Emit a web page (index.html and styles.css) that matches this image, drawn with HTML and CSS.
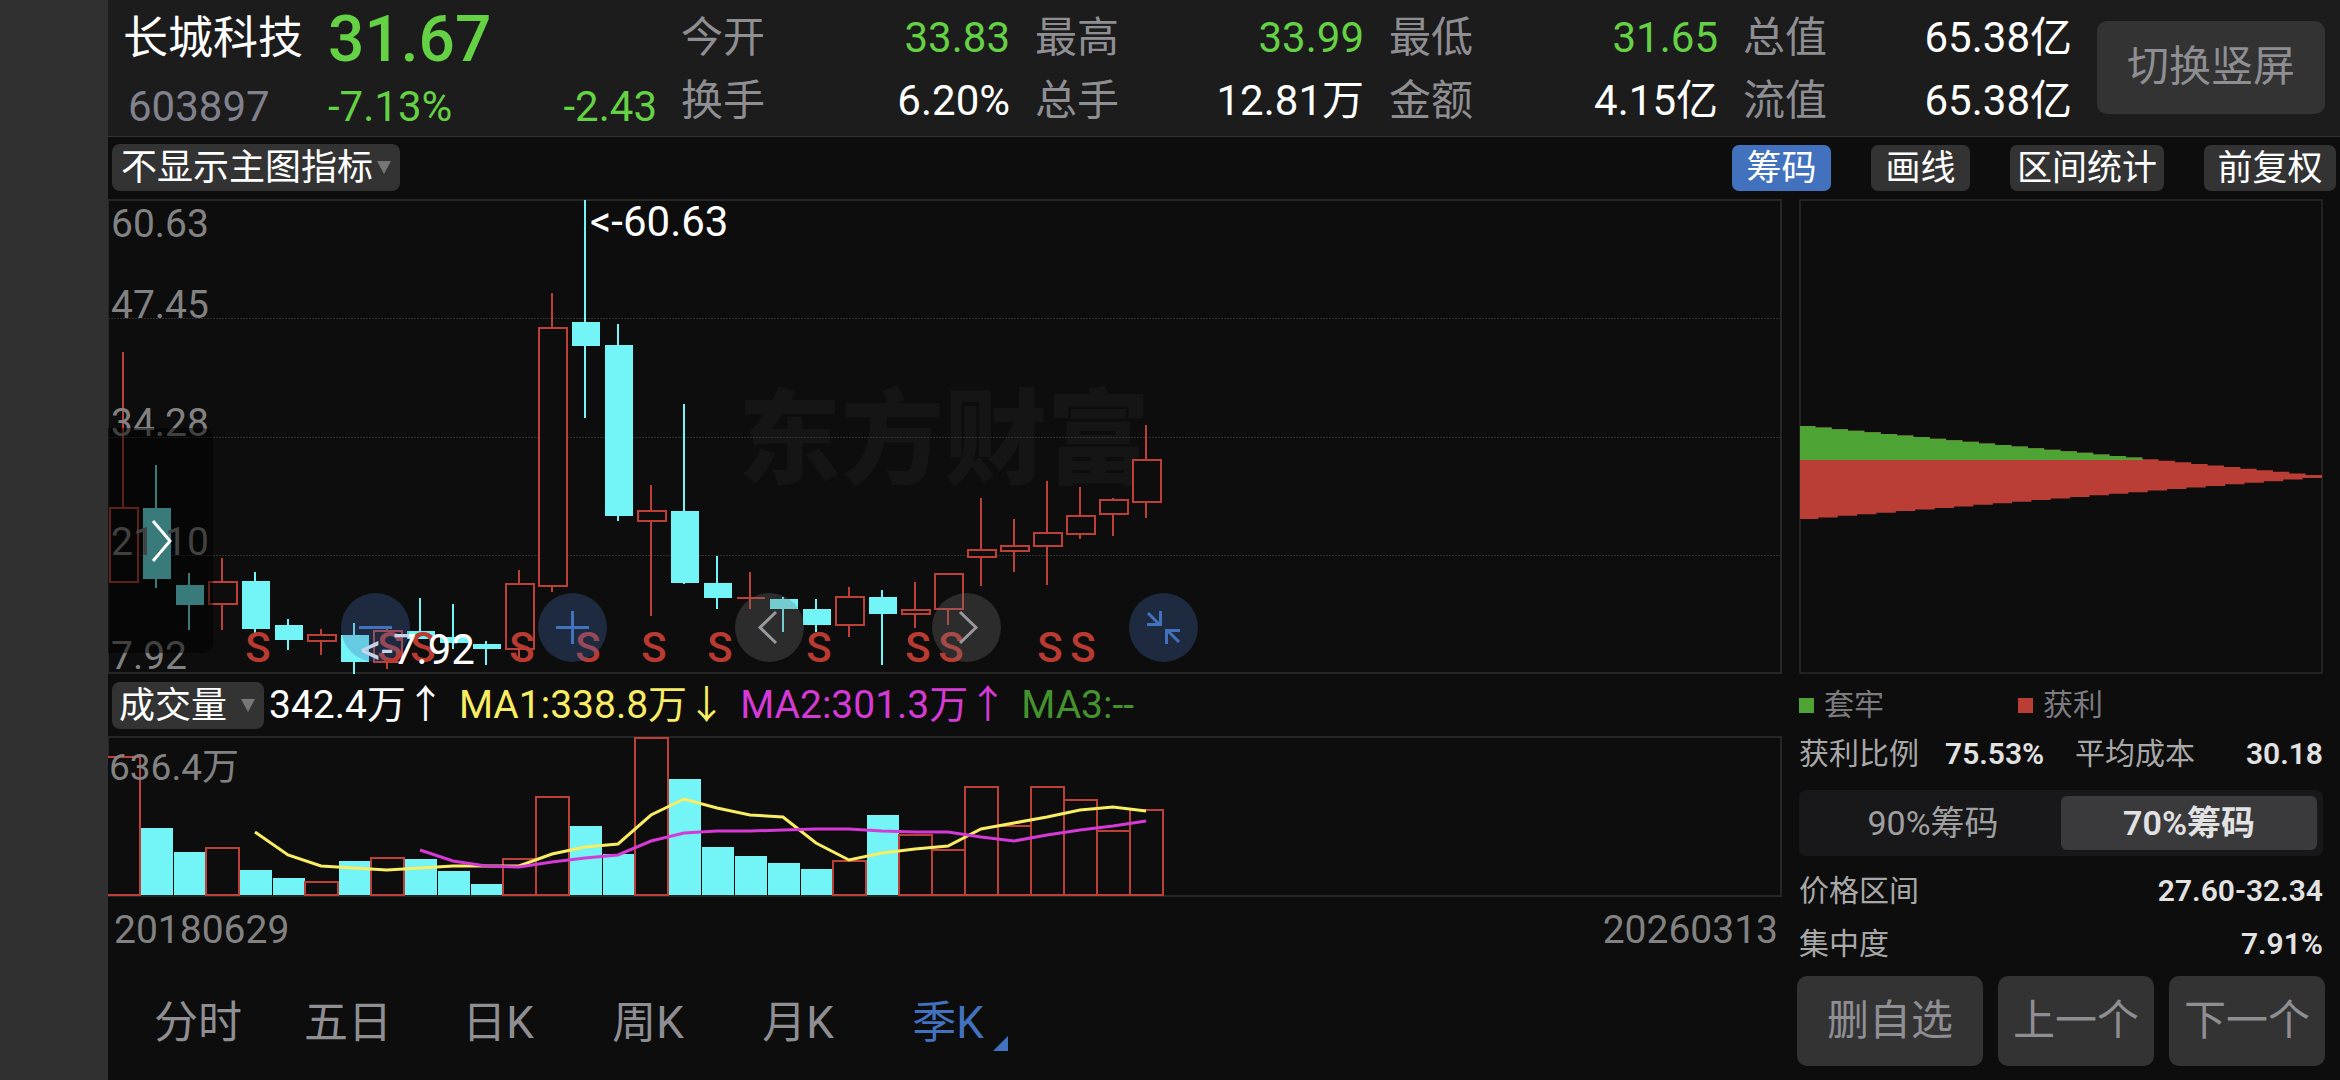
FILE: index.html
```html
<!DOCTYPE html>
<html lang="zh-CN">
<head>
  <meta charset="UTF-8" />
  <meta name="viewport" content="width=device-width, initial-scale=1.0" />
  <title>长城科技 603897</title>
  <link rel="stylesheet" href="styles.css">
</head>
<body>
  <div class="notch"></div>
  <div class="app">
    <header class="quote-header">
      <div class="quote">
        <h1 class="stock-name">长城科技</h1>
        <div class="price">31.67</div>
        <div class="stock-code">603897</div>
        <div class="change"><span>-7.13%</span><span>-2.43</span></div>
      </div>
      <dl class="stats">
        <div class="stat"><dt>今开</dt><dd class="down">33.83</dd></div>
        <div class="stat"><dt>最高</dt><dd class="down">33.99</dd></div>
        <div class="stat"><dt>最低</dt><dd class="down">31.65</dd></div>
        <div class="stat"><dt>总值</dt><dd>65.38亿</dd></div>
        <div class="stat"><dt>换手</dt><dd>6.20%</dd></div>
        <div class="stat"><dt>总手</dt><dd>12.81万</dd></div>
        <div class="stat"><dt>金额</dt><dd>4.15亿</dd></div>
        <div class="stat"><dt>流值</dt><dd>65.38亿</dd></div>
      </dl>
      <button class="btn rotate-btn">切换竖屏</button>
    </header>

    <div class="toolbar">
      <div class="picker picker-main">
        <select aria-label="主图指标"><option>不显示主图指标</option></select>
      </div>
      <div class="tools">
        <button class="chip active">筹码</button>
        <button class="chip">画线</button>
        <button class="chip">区间统计</button>
        <button class="chip chip-wide">前复权</button>
      </div>
    </div>

    <div class="content">
      <main class="charts">
        <div class="kline">
          <svg id="kline" viewBox="0 0 1674 476"></svg>
          <button class="drawer-btn" aria-label="展开">
            <svg width="24" height="44" viewBox="0 0 24 44"><path d="M3 2L20 22L3 42"/></svg>
          </button>
          <div class="zoom-controls">
            <button class="round blue" aria-label="缩小"><svg viewBox="0 0 69 69"><path d="M18 34.500H51"/></svg></button>
            <button class="round blue" aria-label="放大"><svg viewBox="0 0 69 69"><path d="M18 34.500H51M34.500 18V51"/></svg></button>
            <button class="round" aria-label="左移"><svg viewBox="0 0 69 69"><path d="M41 19L25 34.500L41 50"/></svg></button>
            <button class="round" aria-label="右移"><svg viewBox="0 0 69 69"><path d="M28 19L44 34.500L28 50"/></svg></button>
            <button class="round blue" aria-label="收起"><svg viewBox="0 0 69 69"><path d="M19 20L31 32M18 31.500H31.500V18M50 49L38 37M51 37.500H37.500V51"/></svg></button>
          </div>
        </div>

        <div class="indicator">
          <div class="picker picker-vol">
            <select aria-label="副图指标"><option>成交量</option></select>
          </div>
          <span>342.4万↑</span>
          <span class="ma1">MA1:338.8万↓</span>
          <span class="ma2">MA2:301.3万↑</span>
          <span class="ma3">MA3:--</span>
        </div>

        <svg id="volume" viewBox="0 0 1674 162"></svg>

        <div class="dates"><span>20180629</span><span>20260313</span></div>

        <nav class="periods">
          <a href="#">分时</a>
          <a href="#">五日</a>
          <a href="#">日K</a>
          <a href="#">周K</a>
          <a href="#">月K</a>
          <a href="#" class="current">季K</a>
        </nav>
      </main>

      <aside class="chips-panel">
        <div class="chips-body">
          <svg id="chips" viewBox="0 0 524 475"></svg>
          <div class="legend">
            <span class="trapped">套牢</span>
            <span class="profit">获利</span>
          </div>
          <div class="row four">
            <span>获利比例</span><b>75.53%</b><span>平均成本</span><b>30.18</b>
          </div>
          <div class="segment">
            <button>90%筹码</button>
            <button class="on">70%筹码</button>
          </div>
          <div class="row"><span>价格区间</span><b>27.60-32.34</b></div>
          <div class="row"><span>集中度</span><b>7.91%</b></div>
        </div>
        <div class="actions">
          <button class="btn">删自选</button>
          <button class="btn">上一个</button>
          <button class="btn">下一个</button>
        </div>
      </aside>
    </div>
  </div>

  <script src="chart.js"></script>
</body>
</html>
```
FILE: styles.css
```css
:root {
  --bg: #0d0d0d;
  --header-bg: #1c1c1c;
  --btn-bg: #333333;
  --line: #262626;
  --muted: #8e8e93;
  --axis: #828282;
  --red: #bc4037;
  --green: #65d144;
  --cyan: #73f4f6;
  --blue: #4272bd;
  --yellow: #f9ed63;
  --magenta: #d63ad6;
}

* {
  margin: 0;
  padding: 0;
  box-sizing: border-box;
}

body {
  display: flex;
  min-height: 100vh;
  background: var(--bg);
  color: #fff;
  font-family: Roboto, "Noto Sans CJK SC", sans-serif;
}

button, select {
  border: none;
  font-family: inherit;
  color: inherit;
  cursor: pointer;
}

a {
  color: inherit;
  text-decoration: none;
}

svg {
  display: block;
  width: 100%;
}

.notch {
  flex: 0 0 108px;
  background: #303030;
}

.app {
  flex: 1;
  min-width: 0;
}

.btn {
  background: var(--btn-bg);
  color: var(--muted);
  font-size: 42px;
  line-height: 90px;
  border-radius: 10px;
}

/* header */
.quote-header {
  display: flex;
  height: 137px;
  padding: 0 15px 2px;
  background: var(--header-bg);
  border-bottom: 1px solid #333;
}

.quote {
  display: grid;
  grid-template-columns: 205px 329px;
  grid-template-rows: 74px 62px;
  align-items: center;
  width: 558px;
  padding-top: 2px;
}

.stock-name {
  font-size: 45px;
  line-height: 60px;
  font-weight: 400;
}

.price {
  padding-top: 2px;
  font-size: 64px;
  line-height: 74px;
  font-weight: 500;
  color: var(--green);
}

.stock-code {
  padding-left: 5px;
  font-size: 42px;
  line-height: 60px;
  color: #82828f;
}

.change {
  display: flex;
  justify-content: space-between;
  font-size: 42px;
  line-height: 60px;
  color: var(--green);
}

.stats {
  flex: 1;
  display: grid;
  grid-template-columns: repeat(4, 1fr);
  grid-auto-rows: 63px;
  padding-top: 6px;
  font-size: 42px;
  line-height: 63px;
}

.stat {
  display: flex;
  justify-content: space-between;
  padding-right: 25px;
}

.stat dt {
  color: var(--muted);
}

.down {
  color: var(--green);
}

.rotate-btn {
  align-self: center;
  width: 228px;
  height: 93px;
}

/* toolbar */
.toolbar {
  display: flex;
  justify-content: space-between;
  align-items: center;
  height: 61px;
  padding: 0 4px;
}

.picker {
  position: relative;
  height: 47px;
}

.picker select {
  display: block;
  appearance: none;
  width: 100%;
  height: 100%;
  padding-left: 9px;
  font-size: 36px;
  background: var(--btn-bg);
  border-radius: 8px;
}

.picker::after {
  content: "";
  position: absolute;
  right: 9px;
  top: 17px;
  border: 7px solid transparent;
  border-top: 13px solid #777;
  border-bottom: none;
}

.picker-main {
  width: 288px;
}

.picker-vol {
  width: 152px;
}

.picker-vol select {
  padding-left: 7px;
}

.tools {
  display: flex;
  gap: 40px;
}

.chip {
  min-width: 99px;
  height: 46px;
  padding: 0 7px;
  font-size: 35px;
  line-height: 48px;
  background: var(--btn-bg);
  border-radius: 7px;
}

.chip-wide {
  min-width: 132px;
}

.chip.active {
  background: var(--blue);
}

/* charts */
.content {
  display: flex;
  gap: 15px;
  padding: 1px 15px 0 0;
}

.charts {
  flex: 1;
  min-width: 0;
}

.kline {
  position: relative;
}

.frame {
  fill: none;
  stroke: var(--line);
  stroke-width: 2;
}

.grid {
  stroke: #303030;
  stroke-dasharray: 2 1;
}

.up {
  fill: var(--bg);
  stroke: var(--red);
  stroke-width: 2;
}

.fall {
  fill: var(--cyan);
}

.wick {
  stroke-width: 2;
}

.wick-up {
  stroke: var(--red);
}

.wick-fall {
  stroke: var(--cyan);
}

.axis {
  fill: var(--axis);
  font-size: 39px;
}

.volume-max {
  font-size: 37px;
}

.mark {
  fill: #fff;
  font-size: 42px;
}

.sell {
  fill: #b93a31;
  font-size: 42px;
  font-weight: 500;
  text-anchor: middle;
}

.watermark {
  fill: #151515;
  font-size: 103px;
  font-weight: 900;
}

.ma-line {
  fill: none;
  stroke-width: 3;
}

.drawer-btn {
  position: absolute;
  left: 0;
  top: 229px;
  width: 105px;
  height: 225px;
  padding-left: 42px;
  background: rgba(0, 0, 0, 0.5);
  border-radius: 0 10px 10px 0;
}

.drawer-btn svg {
  width: 24px;
  fill: none;
  stroke: #fff;
  stroke-width: 3;
}

.zoom-controls {
  position: absolute;
  left: 233px;
  bottom: 13px;
  display: flex;
  gap: 128px;
}

.round {
  width: 69px;
  height: 69px;
  border-radius: 50%;
  background: rgba(116, 116, 118, 0.3);
}

.round svg {
  fill: none;
  stroke: #98989d;
  stroke-width: 3;
}

.round.blue {
  background: rgba(70, 110, 183, 0.3);
}

.round.blue svg {
  stroke: var(--blue);
}

.indicator {
  display: flex;
  align-items: center;
  height: 61px;
  padding-left: 4px;
  gap: 14px;
  font-size: 39px;
  line-height: 61px;
}

.picker-vol + span {
  margin-left: -9px;
}

.ma1 {
  color: var(--yellow);
}

.ma2 {
  color: var(--magenta);
}

.ma3 {
  color: #45922f;
}

.dates {
  display: flex;
  justify-content: space-between;
  padding: 0 4px 0 6px;
  font-size: 39px;
  line-height: 64px;
  color: var(--axis);
}

.periods {
  display: flex;
  padding-left: 15px;
}

.periods a {
  position: relative;
  width: 150px;
  text-align: center;
  font-size: 44px;
  line-height: 114px;
  padding-top: 4px;
  color: var(--muted);
}

.periods .current {
  color: var(--blue);
}

.periods .current::after {
  content: "";
  position: absolute;
  right: 15px;
  bottom: 29px;
  border-left: 15px solid transparent;
  border-bottom: 15px solid var(--blue);
}

/* chips panel */
.chips-panel {
  width: 528px;
}

.chips-body {
  padding: 0 2px;
}

.legend {
  display: grid;
  grid-template-columns: 219px 1fr;
  font-size: 30px;
  line-height: 62px;
  color: #7c7c80;
}

.legend span {
  display: flex;
  align-items: center;
  gap: 10px;
}

.legend span::before {
  content: "";
  width: 15px;
  height: 15px;
  background: #4da333;
}

.legend .profit::before {
  background: #bb3e36;
}

.row {
  display: flex;
  justify-content: space-between;
  margin-top: 17px;
  font-size: 30px;
  line-height: 36px;
  color: #a8a8a8;
}

.row.four {
  display: grid;
  grid-template-columns: 146px 130px 1fr auto;
  margin-top: 0;
}

.row b {
  font-weight: 600;
  color: #e2e2e2;
}

.segment {
  display: flex;
  height: 66px;
  margin-top: 18px;
  padding: 6px;
  background: #18181a;
  border-radius: 7px;
}

.segment button {
  flex: 1;
  font-size: 34px;
  line-height: 52px;
  color: #a0a0a0;
  background: none;
  border-radius: 6px;
}

.segment .on {
  background: #3a3a3c;
  color: #e2e2e2;
  font-weight: 600;
}

.actions {
  display: grid;
  grid-template-columns: 186fr 156fr 156fr;
  gap: 15px;
  margin-top: 14px;
}

.actions .btn {
  height: 90px;
}
```
FILE: chart.js
```js
// [high, body top, body bottom, low, rising, volume top, volume rising]
const bars = [
  [153, 309, 383, 383, 1, 20, 1],
  [266, 309, 380, 389, 0, 92, 0],
  [374, 386, 406, 431, 0, 116, 0],
  [359, 383, 405, 431, 1, 111, 1],
  [373, 382, 430, 434, 0, 134, 0],
  [420, 426, 441, 451, 0, 142, 0],
  [430, 436, 442, 456, 1, 145, 1],
  [424, 436, 463, 475, 0, 125, 0],
  [430, 432, 463, 470, 1, 121, 1],
  [399, 432, 440, 440, 0, 123, 0],
  [405, 438, 444, 450, 0, 135, 0],
  [442, 445, 450, 466, 0, 148, 0],
  [371, 385, 450, 459, 1, 122, 1],
  [94, 129, 387, 393, 1, 60, 1],
  [1, 123, 147, 219, 0, 90, 0],
  [125, 146, 317, 322, 0, 118, 0],
  [286, 312, 322, 417, 1, 1, 1],
  [205, 312, 384, 385, 0, 43, 0],
  [357, 384, 399, 410, 0, 111, 0],
  [373, 399, 399, 410, 1, 120, 0],
  [398, 400, 410, 433, 0, 127, 0],
  [400, 410, 426, 433, 0, 133, 0],
  [388, 398, 426, 438, 1, 124, 1],
  [391, 398, 415, 466, 0, 79, 0],
  [383, 411, 415, 429, 1, 98, 1],
  [375, 375, 410, 426, 1, 113, 1],
  [299, 351, 358, 387, 1, 50, 1],
  [320, 347, 352, 373, 1, 89, 1],
  [282, 334, 347, 386, 1, 50, 1],
  [288, 317, 335, 340, 1, 63, 1],
  [299, 301, 315, 337, 1, 94, 1],
  [226, 261, 303, 319, 1, 73, 1]
];
const sells = [4, 8, 9, 12, 14, 16, 18, 21, 24, 25, 28, 29];
const ma1 = [96, 119, 130, 132, 134, 132, 130, 130, 130, 118, 111, 108, 79, 63, 72, 79, 81, 107, 124, 117, 113, 110, 93, 87, 81, 74, 71, 75];
const ma2 = [114, 125, 130, 131, 126, 122, 119, 105, 97, 95, 95, 94, 93, 93, 95, 96, 96, 101, 105, 99, 94, 90, 85];

const center = i => 15 + 33 * i;

function drawKline() {
  let s = '<text class="watermark" x="630" y="277">东方财富</text>';
  [119, 238, 356].forEach(y => s += `<line class="grid" x1="0" x2="1673" y1="${y}.5" y2="${y}.5"/>`);
  s += '<rect class="frame" x="0" y="1" width="1673" height="473"/>';
  bars.forEach(([high, top, bottom, low, rising], i) => {
    const c = center(i);
    const kind = rising ? 'up' : 'fall';
    s += `<path class="wick wick-${kind}" d="M${c} ${high}V${top}M${c} ${bottom}V${low}"/>`;
    if (top === bottom) s += `<path class="wick wick-up" d="M${c - 13} ${top}H${c + 15}"/>`;
    else s += `<rect class="${kind}" x="${c - 13}" y="${top}" width="28" height="${bottom - top}"/>`;
  });
  sells.forEach(i => s += `<text class="sell" x="${center(i) + 3}" y="463">S</text>`);
  [['60.63', 38], ['47.45', 119], ['34.28', 237], ['21.10', 356], ['7.92', 470]].forEach(([t, y]) => {
    s += `<text class="axis" x="3" y="${y}">${t}</text>`;
  });
  s += '<text class="mark" x="482" y="37">&lt;-60.63</text>';
  s += '<text class="mark" x="252" y="465">&lt;-7.92</text>';
  document.getElementById('kline').innerHTML = s;
}

function maLine(values, first, color) {
  const points = values.map((y, i) => `${center(i + first)},${y}`).join(' ');
  return `<polyline class="ma-line" stroke="var(--${color})" points="${points}"/>`;
}

function drawVolume() {
  let s = '<rect class="frame" x="0" y="1" width="1673" height="159"/>';
  bars.forEach((b, i) => {
    const x = 33 * i;
    if (b[6]) s += `<rect class="up" x="${x - 1}" y="${b[5] + 1}" width="33" height="${158 - b[5]}"/>`;
    else s += `<rect class="fall" x="${x}" y="${b[5]}" width="32" height="${159 - b[5]}"/>`;
  });
  s += maLine(ma1, 4, 'yellow') + maLine(ma2, 9, 'magenta');
  s += '<text class="axis volume-max" x="1" y="44">636.4万</text>';
  document.getElementById('volume').innerHTML = s;
}

// the distribution narrows in steps, one per price level
function drawChips() {
  let d = 'M1 227';
  for (let k = 0; k < 32; k++) d += `V${227 + k * 49 / 31}H${(k + 1) * 523 / 32}`;
  for (let k = 26; k >= 0; k--) d += `V${320 - k * 41 / 26}H${k ? k * 523 / 27 : 1}`;
  d += 'Z';
  document.getElementById('chips').innerHTML = `
    <clipPath id="above"><rect width="344" height="261"/></clipPath>
    <rect x="1" y="1" width="522" height="473" fill="none" stroke="#363636" stroke-width="1"/>
    <path d="${d}" fill="#bb3e36"/>
    <path d="${d}" fill="#4da333" clip-path="url(#above)"/>`;
}

drawKline();
drawVolume();
drawChips();
```
